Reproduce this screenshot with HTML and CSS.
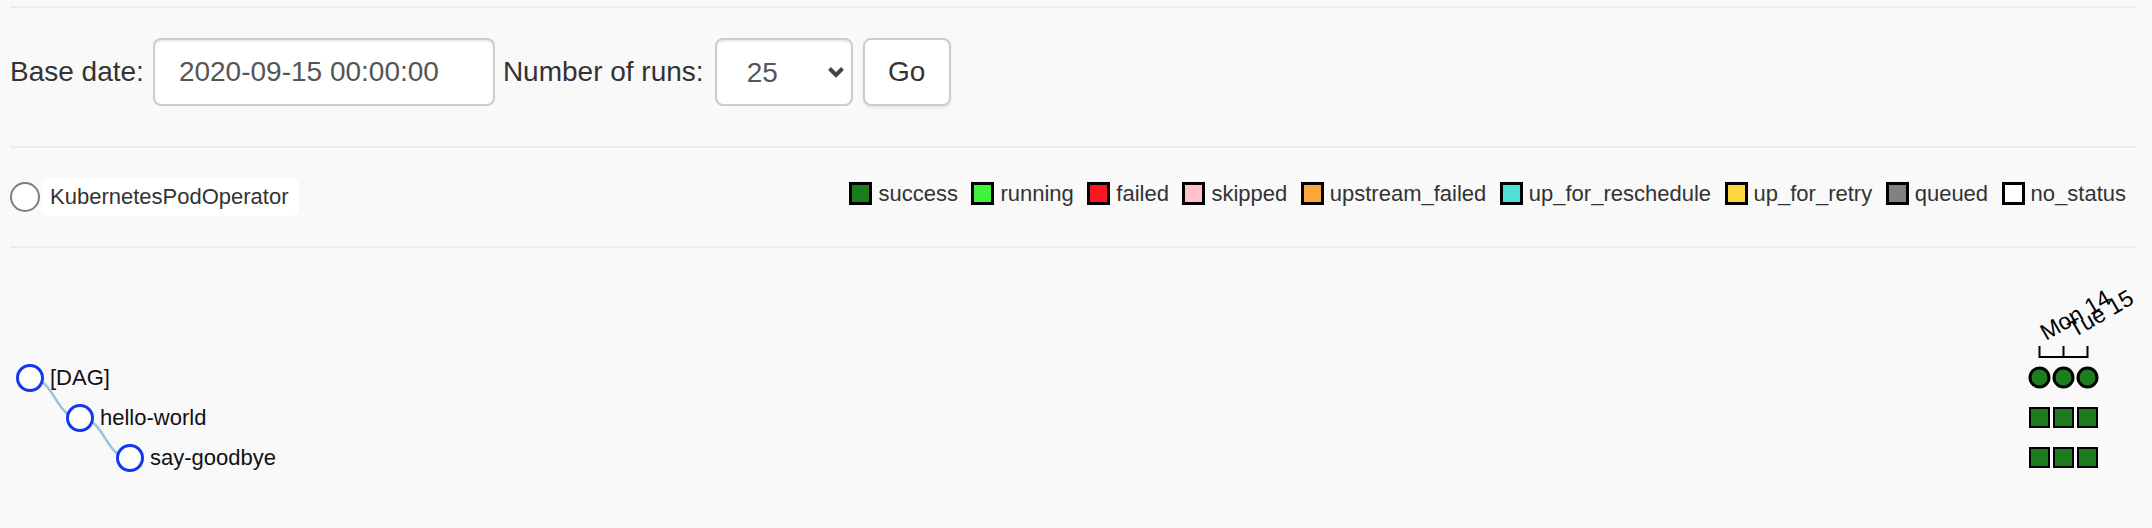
FILE: index.html
```html
<!DOCTYPE html>
<html lang="en">
<head>
<meta charset="utf-8">
<title>Tree View</title>
<link rel="stylesheet" href="styles.css">
</head>
<body>
<div class="page">
  <div class="rule rule-top"></div>
  <form class="controls">
    <label class="ctl-label label-date" for="base_date">Base date:</label>
    <input id="base_date" class="field date-field" value="2020-09-15 00:00:00">
    <label class="ctl-label label-runs" for="num_runs">Number of runs:</label>
    <div class="select-wrap">
      <select id="num_runs" class="field select-field"><option>25</option></select>
      <svg class="chevron" width="18" height="12" viewBox="0 0 18 12"><polyline points="2.5,2.5 9,9 15.5,2.5"/></svg>
    </div>
    <button type="button" class="btn-go">Go</button>
  </form>
  <div class="rule"></div>
  <div class="legend-row">
    <div class="operator">
      <span class="op-circle"></span>
      <span class="op-name">KubernetesPodOperator</span>
    </div>
    <div class="states">
      <span class="state"><span class="swatch s-success"></span>success</span>
      <span class="state"><span class="swatch s-running"></span>running</span>
      <span class="state"><span class="swatch s-failed"></span>failed</span>
      <span class="state"><span class="swatch s-skipped"></span>skipped</span>
      <span class="state"><span class="swatch s-upstream"></span>upstream_failed</span>
      <span class="state"><span class="swatch s-resched"></span>up_for_reschedule</span>
      <span class="state"><span class="swatch s-retry"></span>up_for_retry</span>
      <span class="state"><span class="swatch s-queued"></span>queued</span>
      <span class="state"><span class="swatch s-none"></span>no_status</span>
    </div>
  </div>
  <div class="rule"></div>
  <svg class="tree" width="2127" height="280" viewBox="0 0 2127 280">
    <g class="link">
      <path d="M20,130 C45,130 45,170 70,170"/>
      <path d="M70,170 C95,170 95,210 120,210"/>
    </g>
    <g class="node">
      <circle cx="20" cy="130" r="12.5"/>
      <circle cx="70" cy="170" r="12.5"/>
      <circle cx="120" cy="210" r="12.5"/>
    </g>
    <g class="node-label">
      <text x="40" y="137">[DAG]</text>
      <text x="90" y="177">hello-world</text>
      <text x="140" y="217">say-goodbye</text>
    </g>
    <g class="axis">
      <path d="M2029.5,98 V109 H2077.5 V98"/>
      <line x1="2053.5" y1="98" x2="2053.5" y2="109"/>
      <text x="2036" y="93" transform="rotate(-30 2036 93)">Mon 14</text>
      <text x="2064" y="90" transform="rotate(-30 2064 90)">Tue 15</text>
    </g>
    <g class="run">
      <circle cx="2029.5" cy="129.5" r="9.5"/>
      <circle cx="2053.5" cy="129.5" r="9.5"/>
      <circle cx="2077.5" cy="129.5" r="9.5"/>
    </g>
    <g class="task">
      <rect x="2020" y="160" width="19" height="19"/>
      <rect x="2044" y="160" width="19" height="19"/>
      <rect x="2068" y="160" width="19" height="19"/>
      <rect x="2020" y="200" width="19" height="19"/>
      <rect x="2044" y="200" width="19" height="19"/>
      <rect x="2068" y="200" width="19" height="19"/>
    </g>
  </svg>
</div>
</body>
</html>
```
FILE: styles.css
```css
html, body {
  margin: 0;
  padding: 0;
}
body {
  background: #f9f9f9;
  font-family: "Liberation Sans", Arial, sans-serif;
  color: #333;
}
.page {
  padding: 0 15px 0 10px;
}
.rule {
  height: 2px;
  background: #ececec;
}
.rule-top {
  margin-top: 6px;
}

/* controls */
.controls {
  display: flex;
  align-items: center;
  margin: 0;
  padding: 30px 0 40px;
}
.ctl-label {
  font-size: 28px;
  line-height: 68px;
  color: #333;
}
.label-date {
  margin-right: 9px;
}
.label-runs {
  margin: 0 11px 0 8px;
}
.field {
  box-sizing: border-box;
  height: 68px;
  margin: 0;
  border: 2px solid #ccc;
  border-radius: 8px;
  background: #fff;
  box-shadow: inset 0 2px 2px rgba(0, 0, 0, 0.075);
  font: 28px "Liberation Sans", Arial, sans-serif;
  color: #555;
  outline: none;
}
.date-field {
  width: 342px;
  padding: 0 24px;
}
.select-wrap {
  position: relative;
  display: flex;
}
.select-field {
  width: 138px;
  padding: 0 0 0 30px;
  appearance: none;
  -webkit-appearance: none;
}
.chevron {
  position: absolute;
  left: 112px;
  top: 28px;
  pointer-events: none;
}
.chevron polyline {
  fill: none;
  stroke: #444;
  stroke-width: 4;
}
.btn-go {
  box-sizing: border-box;
  margin: 0 0 0 10px;
  width: 88px;
  height: 68px;
  padding: 0;
  border: 2px solid #ccc;
  border-radius: 8px;
  background: #fff;
  box-shadow: 0 2px 3px rgba(0, 0, 0, 0.08);
  font: 28px "Liberation Sans", Arial, sans-serif;
  color: #333;
}

/* legend row */
.legend-row {
  height: 98px;
  display: flex;
  align-items: center;
  justify-content: space-between;
}
.operator {
  display: flex;
  align-items: center;
}
.op-circle {
  box-sizing: border-box;
  width: 30px;
  height: 30px;
  border: 2px solid #7d7d7d;
  border-radius: 50%;
  background: #fff;
}
.op-name {
  margin-left: 1px;
  height: 38px;
  padding: 0 10px 0 9px;
  border-radius: 8px;
  background: #fff;
  font-size: 22px;
  line-height: 38px;
  color: #333;
}
.states {
  display: flex;
  align-items: center;
  gap: 13.5px;
  padding-right: 11px;
  margin-bottom: 7px;
}
.state {
  display: flex;
  align-items: center;
  font-size: 22px;
  line-height: 24px;
  color: #333;
}
.swatch {
  box-sizing: border-box;
  width: 23px;
  height: 23px;
  margin-right: 6px;
  border: 3px solid #000;
}
.s-success { background: #1d7c1d; }
.s-running { background: #3ef43e; }
.s-failed { background: #fd1522; }
.s-skipped { background: #ffc1cc; }
.s-upstream { background: #fda53a; }
.s-resched { background: #52e0d4; }
.s-retry { background: #fed63d; }
.s-queued { background: #818181; }
.s-none { background: #fff; }

/* tree */
.tree {
  display: block;
}
.link path {
  fill: none;
  stroke: #9fc4de;
  stroke-width: 2.5;
}
.node circle {
  fill: #fff;
  stroke: #1237f4;
  stroke-width: 3;
}
.node-label text {
  font-family: "Liberation Sans", Arial, sans-serif;
  font-size: 22px;
  fill: #111;
}
.axis path,
.axis line {
  fill: none;
  stroke: #000;
  stroke-width: 2;
}
.axis text {
  font-family: "Liberation Sans", Arial, sans-serif;
  font-size: 23px;
  fill: #000;
}
.run circle {
  fill: #1d7c1d;
  stroke: #000;
  stroke-width: 3;
}
.task rect {
  fill: #1d7c1d;
  stroke: #000;
  stroke-width: 2;
}
```
